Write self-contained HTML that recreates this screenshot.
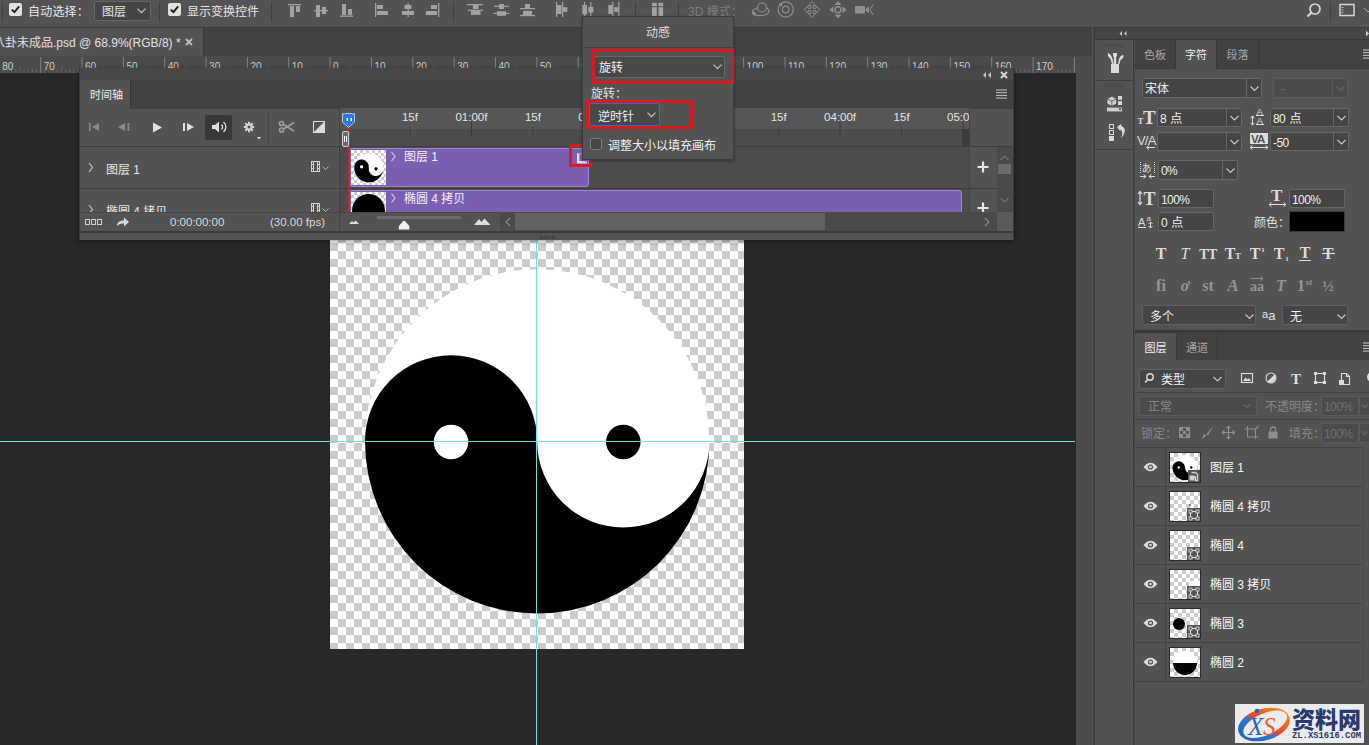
<!DOCTYPE html>
<html lang="zh-CN">
<head>
<meta charset="utf-8">
<title>Photoshop</title>
<style>
*{box-sizing:border-box;margin:0;padding:0}
html,body{width:1369px;height:745px;overflow:hidden;background:#282828}
body{position:relative;font-family:"Liberation Sans","Noto Sans CJK SC",sans-serif;font-size:12px;color:#e6e6e6;line-height:1}
.a{position:absolute}
.t{position:absolute;white-space:nowrap;line-height:16px;height:16px}
svg{position:absolute;overflow:visible}
/* ---------- top bars ---------- */
#opt{left:0;top:0;width:1369px;height:28px;background:#535353;border-bottom:1px solid #3b3b3b}
#tabbar{left:0;top:28px;width:1092px;height:28px;background:#424242}
#doctab{left:0;top:28px;width:204px;height:28px;background:#535353;border-right:1px solid #383838}
#ruler{left:0;top:56px;width:1076px;height:17px;background:#4b4b4b}
.cb{position:absolute;width:13px;height:13px;background:#e1e1e1;border-radius:2px}
.sel{position:absolute;background:#454545;border:1px solid #666;border-radius:2px}
.sep{position:absolute;width:1px;background:#404040}
/* ---------- canvas ---------- */
#canvas{left:330px;top:240px;width:414px;height:409px;background-color:#fff;
 background-image:conic-gradient(#fff 25%,#ccc 0 50%,#fff 0 75%,#ccc 0);
 background-size:16px 16px;background-position:0 3px;overflow:hidden}
.guide{position:absolute;background:#6fe3e0}

/* ---------- right dock ---------- */
#vscroll{left:1076px;top:56px;width:17px;height:689px;background:#4b4b4b}
#dockline{left:1092px;top:27px;width:3px;height:718px;background:linear-gradient(90deg,#565656 0 1px,#404040 1px 3px)}
#docktop{left:1095px;top:28px;width:274px;height:12px;background:#454545;border-bottom:1px solid #383838}
#strip{left:1095px;top:40px;width:38px;height:705px;background:#535353;border-right:1px solid #5a5a5a}
#stripline{left:1133px;top:40px;width:3px;height:705px;background:linear-gradient(90deg,#3c3c3c 0 1.300px,#4b4b4b 1.300px 3px)}
#charpanel{left:1135px;top:40px;width:234px;height:294px;background:#535353}
#chartabs{left:1135px;top:40px;width:234px;height:28px;background:#424242;box-shadow:0 1px 0 #3c3c3c}
#laypanel{left:1135px;top:334px;width:234px;height:411px;background:#535353}
#laytabs{left:1135px;top:334px;width:234px;height:27px;background:#424242}
.tab{position:absolute;height:100%;top:0;border-right:1px solid #383838;color:#a6a6a6;text-align:center;font-size:11px}
.tab.on{background:#535353;color:#f0f0f0}
.inp{position:absolute;background:#454545;border:1px solid #666;border-radius:2px}
.inp.dim{background:#4b4b4b;border-color:#5a5a5a}
.inp i{position:absolute;right:14px;top:0;bottom:0;width:1px;background:#666}
.row{position:absolute;left:1135px;width:227px;height:39px;border-top:1px solid #434343}
.th{position:absolute;left:34px;top:4px;width:32px;height:31px;border:1px solid #2b2b2b;background-color:#fff;
 background-image:linear-gradient(45deg,#ccc 25%,transparent 25%,transparent 75%,#ccc 75%),linear-gradient(45deg,#ccc 25%,transparent 25%,transparent 75%,#ccc 75%);
 background-size:8px 8px;background-position:0 0,4px 4px;overflow:hidden}

/* ---------- timeline ---------- */
#tl{left:79px;top:68px;width:935px;height:172px;background:#535353;overflow:hidden;box-shadow:0 1px 5px rgba(0,0,0,.45);border-left:1px solid #3a3a3a;border-right:1px solid #3a3a3a}
#tl .a{position:absolute}
.pl{fill:#d9d9d9}
</style>
</head>
<body>
<!-- canvas -->
<div id="canvas" class="a"></div>
<svg class="a" style="left:330px;top:240px" width="414" height="409" viewBox="330 240 414 409">
  <circle cx="537.200" cy="441.400" r="172.200" fill="#fff"/>
  <path d="M365 441.400 A172.200 172.200 0 0 0 709.400 441.400 A86.100 86.100 0 0 1 537.200 441.400 A86.100 86.100 0 0 0 365 441.400Z" fill="#000"/>
  <circle cx="451" cy="442" r="17.300" fill="#fff"/>
  <circle cx="623.300" cy="442" r="17.300" fill="#000"/>
</svg>
<div class="guide" style="left:0;top:441px;width:1075px;height:1px"></div>
<div class="guide" style="left:536px;top:240px;width:1px;height:505px"></div>

<!-- top bars -->
<div id="opt" class="a"></div>
<div id="tabbar" class="a"></div>
<div id="doctab" class="a"></div>
<div id="ruler" class="a"></div>

<!-- options bar content -->
<div class="sep" style="left:2px;top:2px;height:20px"></div>
<div class="cb" style="left:9px;top:3px"></div>
<svg style="left:9px;top:3px" width="13" height="13" viewBox="0 0 13 13"><path d="M2.8 6.6 L5.4 9.2 L10.2 3.4" fill="none" stroke="#1e1e1e" stroke-width="1.9"/></svg>
<div class="t" style="left:28px;top:4px;font-size:12px;letter-spacing:0.2px">自动选择：</div>
<div class="sel" style="left:94px;top:1px;width:57px;height:20px"></div>
<div class="t" style="left:102px;top:4px;font-size:12px">图层</div>
<svg style="left:137px;top:8px" width="9" height="6" viewBox="0 0 9 6"><path d="M0.5 0.7 L4.5 4.7 L8.5 0.7" fill="none" stroke="#c8c8c8" stroke-width="1.1"/></svg>
<div class="sep" style="left:159px;top:2px;height:20px"></div>
<div class="cb" style="left:168px;top:3px"></div>
<svg style="left:168px;top:3px" width="13" height="13" viewBox="0 0 13 13"><path d="M2.8 6.6 L5.4 9.2 L10.2 3.4" fill="none" stroke="#1e1e1e" stroke-width="1.9"/></svg>
<div class="t" style="left:187px;top:4px;font-size:12px">显示变换控件</div>
<div class="sep" style="left:271px;top:2px;height:20px"></div>
<div class="sep" style="left:453px;top:2px;height:20px"></div>
<div class="sep" style="left:635px;top:2px;height:20px"></div>
<div class="sep" style="left:678px;top:2px;height:20px"></div>
<!-- align icons -->
<svg style="left:283px;top:2px" width="360" height="18" viewBox="283 2 360 18" fill="#a2a2a2">
 <!-- align top -->
 <rect x="288" y="4" width="13" height="1.3"/><rect x="290" y="6" width="4" height="11"/><rect x="296" y="6" width="4" height="6"/>
 <!-- align vcenter -->
 <rect x="314" y="10" width="14" height="1.3"/><rect x="316" y="5" width="4" height="12"/><rect x="322" y="7" width="4" height="7"/>
 <!-- align bottom -->
 <rect x="340" y="15.5" width="13" height="1.3"/><rect x="342" y="4" width="4" height="11"/><rect x="348" y="9" width="4" height="6"/>
 <!-- align left -->
 <rect x="375" y="3" width="1.3" height="14"/><rect x="377" y="5" width="6" height="4"/><rect x="377" y="11" width="11" height="4"/>
 <!-- align hcenter -->
 <rect x="407.5" y="3" width="1.3" height="14"/><rect x="404.5" y="5" width="7" height="4"/><rect x="402" y="11" width="12" height="4"/>
 <!-- align right -->
 <rect x="438" y="3" width="1.3" height="14"/><rect x="431" y="5" width="6" height="4"/><rect x="426" y="11" width="11" height="4"/>
 <!-- distribute top -->
 <rect x="467" y="4" width="16" height="1.200"/><rect x="473" y="5" width="5.500" height="4"/><rect x="468" y="9.700" width="15" height="1.200"/><rect x="471" y="10.500" width="9.500" height="4.300"/>
 <!-- distribute vcenter -->
 <rect x="494" y="5.700" width="15" height="1.200"/><rect x="499" y="4" width="5" height="5"/><rect x="493.500" y="12.800" width="15.500" height="1.200"/><rect x="497" y="11.200" width="9" height="4.600"/>
 <!-- distribute bottom -->
 <rect x="525" y="4" width="5" height="4.200"/><rect x="520" y="8" width="15" height="1.200"/><rect x="523" y="10.800" width="9" height="4.300"/><rect x="520" y="15" width="15" height="1.200"/>
 <!-- distribute left -->
 <rect x="556" y="2" width="1.200" height="15"/><rect x="557" y="5" width="4.500" height="9"/><rect x="562" y="2" width="1.200" height="15"/><rect x="563" y="7.200" width="4.300" height="4.600"/>
 <!-- distribute hcenter -->
 <rect x="584" y="2" width="1.200" height="14"/><rect x="582.400" y="5" width="4.600" height="9.500"/><rect x="590.200" y="2" width="1.200" height="14"/><rect x="588.300" y="6.800" width="5" height="5.700"/>
 <!-- distribute right -->
 <rect x="612.200" y="2" width="1.200" height="14"/><rect x="608.300" y="5" width="4.300" height="9"/><rect x="618.300" y="2" width="1.200" height="14"/><rect x="614.200" y="7.200" width="4.400" height="4.600"/>
</svg>
<svg style="left:648px;top:2px" width="16" height="16" viewBox="648 2 16 16" fill="#a2a2a2">
 <rect x="652" y="2.800" width="4.800" height="3.400"/><rect x="658.400" y="2.800" width="4.800" height="3.400"/><rect x="652" y="7.200" width="4.800" height="9"/><rect x="658.400" y="7.200" width="4.800" height="9"/>
</svg>
<div class="t" style="left:688px;top:4px;font-size:12px;color:#7c7c7c">3D 模式：</div>
<!-- 3D icons -->
<svg style="left:748px;top:0" width="130" height="22" viewBox="748 0 130 22" fill="none" stroke="#8e8e8e" stroke-width="1.200">
 <circle cx="762" cy="7.500" r="4.500"/><path d="M757.500 8 q-6 1.500 -5 5 q2 3.500 10 2.500 q7 -1.500 6.500 -5 q-1 -2 -3 -2.500"/><path d="M752.500 11 l0.500 4.500 l4 -1.500z" fill="#8e8e8e" stroke="none"/>
 <circle cx="785.700" cy="9.500" r="7.600"/><circle cx="785.700" cy="9.500" r="3.300"/><path d="M779 3 l1.500 4 l2.500 -3z" fill="#8e8e8e" stroke="none"/>
 <path d="M812 1.500 l3.500 4 h-2.300 v2.800 h2.800 v-2.300 l4 3.500 l-4 3.500 v-2.300 h-2.800 v2.800 h2.300 l-3.500 4 l-3.500 -4 h2.300 v-2.800 h-2.800 v2.300 l-4 -3.500 l4 -3.500 v2.300 h2.800 v-2.800 h-2.300z" stroke-width="1"/>
 <path d="M838 1 l-3.500 4 h7z M838 18.500 l-3.500 -4 h7z M829.500 9.700 l4 -3.500 v7z M846.500 9.700 l-4 -3.500 v7z" fill="#8e8e8e" stroke="none"/><circle cx="838" cy="9.700" r="3" stroke-width="1.400"/>
 <rect x="855" y="6" width="10" height="7.500" rx="1" fill="#8e8e8e" stroke="none"/><path d="M865 9.700 l4 -3.500 v7z" fill="#8e8e8e" stroke="none"/><path d="M873 4.500 l-3 5.200 l3 5.200" stroke-width="1"/>
</svg>
<!-- search + workspace -->
<svg style="left:1305px;top:1px" width="64" height="20" viewBox="1305 1 64 20" fill="none" stroke="#d6d6d6">
 <circle cx="1315" cy="9" r="5" stroke-width="1.7"/><path d="M1311.3 12.7 L1307.5 16.5" stroke-width="2.2"/>
 <rect x="1340" y="4.5" width="14" height="11" stroke-width="1.5"/><path d="M1342.5 7v1 M1342.5 9.5v1 M1342.5 12v1" stroke-width="1.5"/>
 <path d="M1364 8 l4 4 l2 -2" stroke-width="1" stroke="#aaa"/>
</svg>
<div class="sep" style="left:1330px;top:2px;height:20px"></div>

<!-- doc tab -->
<div class="t" style="left:-7px;top:35px;font-size:12px;color:#e0e0e0">八卦未成品.psd @ 68.9%(RGB/8) *</div>
<svg style="left:185px;top:38px" width="8" height="8" viewBox="0 0 8 8"><path d="M1 1 L7 7 M7 1 L1 7" stroke="#bdbdbd" stroke-width="1.8"/></svg>

<!-- ruler -->

<svg style="left:0;top:0;overflow:hidden" width="1076" height="74" viewBox="0 0 1076 74">
<g fill="#626262"><rect x="2.9" y="69" width="1" height="4"/><rect x="7.1" y="69" width="1" height="4"/><rect x="11.2" y="69" width="1" height="4"/><rect x="15.3" y="69" width="1" height="4"/><rect x="19.5" y="66" width="1" height="7"/><rect x="23.6" y="69" width="1" height="4"/><rect x="27.7" y="69" width="1" height="4"/><rect x="31.9" y="69" width="1" height="4"/><rect x="36.0" y="69" width="1" height="4"/><rect x="44.3" y="69" width="1" height="4"/><rect x="48.4" y="69" width="1" height="4"/><rect x="52.6" y="69" width="1" height="4"/><rect x="56.7" y="69" width="1" height="4"/><rect x="60.8" y="66" width="1" height="7"/><rect x="65.0" y="69" width="1" height="4"/><rect x="69.1" y="69" width="1" height="4"/><rect x="73.2" y="69" width="1" height="4"/><rect x="77.4" y="69" width="1" height="4"/><rect x="85.6" y="69" width="1" height="4"/><rect x="89.8" y="69" width="1" height="4"/><rect x="93.9" y="69" width="1" height="4"/><rect x="98.0" y="69" width="1" height="4"/><rect x="102.2" y="66" width="1" height="7"/><rect x="106.3" y="69" width="1" height="4"/><rect x="110.4" y="69" width="1" height="4"/><rect x="114.6" y="69" width="1" height="4"/><rect x="118.7" y="69" width="1" height="4"/><rect x="127.0" y="69" width="1" height="4"/><rect x="131.1" y="69" width="1" height="4"/><rect x="135.3" y="69" width="1" height="4"/><rect x="139.4" y="69" width="1" height="4"/><rect x="143.5" y="66" width="1" height="7"/><rect x="147.7" y="69" width="1" height="4"/><rect x="151.8" y="69" width="1" height="4"/><rect x="155.9" y="69" width="1" height="4"/><rect x="160.1" y="69" width="1" height="4"/><rect x="168.3" y="69" width="1" height="4"/><rect x="172.5" y="69" width="1" height="4"/><rect x="176.6" y="69" width="1" height="4"/><rect x="180.7" y="69" width="1" height="4"/><rect x="184.9" y="66" width="1" height="7"/><rect x="189.0" y="69" width="1" height="4"/><rect x="193.1" y="69" width="1" height="4"/><rect x="197.3" y="69" width="1" height="4"/><rect x="201.4" y="69" width="1" height="4"/><rect x="209.7" y="69" width="1" height="4"/><rect x="213.8" y="69" width="1" height="4"/><rect x="218.0" y="69" width="1" height="4"/><rect x="222.1" y="69" width="1" height="4"/><rect x="226.2" y="66" width="1" height="7"/><rect x="230.4" y="69" width="1" height="4"/><rect x="234.5" y="69" width="1" height="4"/><rect x="238.6" y="69" width="1" height="4"/><rect x="242.8" y="69" width="1" height="4"/><rect x="251.0" y="69" width="1" height="4"/><rect x="255.2" y="69" width="1" height="4"/><rect x="259.3" y="69" width="1" height="4"/><rect x="263.4" y="69" width="1" height="4"/><rect x="267.6" y="66" width="1" height="7"/><rect x="271.7" y="69" width="1" height="4"/><rect x="275.8" y="69" width="1" height="4"/><rect x="280.0" y="69" width="1" height="4"/><rect x="284.1" y="69" width="1" height="4"/><rect x="292.4" y="69" width="1" height="4"/><rect x="296.5" y="69" width="1" height="4"/><rect x="300.7" y="69" width="1" height="4"/><rect x="304.8" y="69" width="1" height="4"/><rect x="308.9" y="66" width="1" height="7"/><rect x="313.1" y="69" width="1" height="4"/><rect x="317.2" y="69" width="1" height="4"/><rect x="321.3" y="69" width="1" height="4"/><rect x="325.5" y="69" width="1" height="4"/><rect x="333.7" y="69" width="1" height="4"/><rect x="337.9" y="69" width="1" height="4"/><rect x="342.0" y="69" width="1" height="4"/><rect x="346.1" y="69" width="1" height="4"/><rect x="350.3" y="66" width="1" height="7"/><rect x="354.4" y="69" width="1" height="4"/><rect x="358.5" y="69" width="1" height="4"/><rect x="362.7" y="69" width="1" height="4"/><rect x="366.8" y="69" width="1" height="4"/><rect x="375.1" y="69" width="1" height="4"/><rect x="379.2" y="69" width="1" height="4"/><rect x="383.4" y="69" width="1" height="4"/><rect x="387.5" y="69" width="1" height="4"/><rect x="391.6" y="66" width="1" height="7"/><rect x="395.8" y="69" width="1" height="4"/><rect x="399.9" y="69" width="1" height="4"/><rect x="404.0" y="69" width="1" height="4"/><rect x="408.2" y="69" width="1" height="4"/><rect x="416.4" y="69" width="1" height="4"/><rect x="420.6" y="69" width="1" height="4"/><rect x="424.7" y="69" width="1" height="4"/><rect x="428.8" y="69" width="1" height="4"/><rect x="433.0" y="66" width="1" height="7"/><rect x="437.1" y="69" width="1" height="4"/><rect x="441.2" y="69" width="1" height="4"/><rect x="445.4" y="69" width="1" height="4"/><rect x="449.5" y="69" width="1" height="4"/><rect x="457.8" y="69" width="1" height="4"/><rect x="461.9" y="69" width="1" height="4"/><rect x="466.1" y="69" width="1" height="4"/><rect x="470.2" y="69" width="1" height="4"/><rect x="474.3" y="66" width="1" height="7"/><rect x="478.5" y="69" width="1" height="4"/><rect x="482.6" y="69" width="1" height="4"/><rect x="486.7" y="69" width="1" height="4"/><rect x="490.9" y="69" width="1" height="4"/><rect x="499.1" y="69" width="1" height="4"/><rect x="503.3" y="69" width="1" height="4"/><rect x="507.4" y="69" width="1" height="4"/><rect x="511.5" y="69" width="1" height="4"/><rect x="515.7" y="66" width="1" height="7"/><rect x="519.8" y="69" width="1" height="4"/><rect x="523.9" y="69" width="1" height="4"/><rect x="528.1" y="69" width="1" height="4"/><rect x="532.2" y="69" width="1" height="4"/><rect x="540.5" y="69" width="1" height="4"/><rect x="544.6" y="69" width="1" height="4"/><rect x="548.8" y="69" width="1" height="4"/><rect x="552.9" y="69" width="1" height="4"/><rect x="557.0" y="66" width="1" height="7"/><rect x="561.2" y="69" width="1" height="4"/><rect x="565.3" y="69" width="1" height="4"/><rect x="569.4" y="69" width="1" height="4"/><rect x="573.6" y="69" width="1" height="4"/><rect x="581.8" y="69" width="1" height="4"/><rect x="586.0" y="69" width="1" height="4"/><rect x="590.1" y="69" width="1" height="4"/><rect x="594.2" y="69" width="1" height="4"/><rect x="598.4" y="66" width="1" height="7"/><rect x="602.5" y="69" width="1" height="4"/><rect x="606.6" y="69" width="1" height="4"/><rect x="610.8" y="69" width="1" height="4"/><rect x="614.9" y="69" width="1" height="4"/><rect x="623.2" y="69" width="1" height="4"/><rect x="627.3" y="69" width="1" height="4"/><rect x="631.5" y="69" width="1" height="4"/><rect x="635.6" y="69" width="1" height="4"/><rect x="639.7" y="66" width="1" height="7"/><rect x="643.9" y="69" width="1" height="4"/><rect x="648.0" y="69" width="1" height="4"/><rect x="652.1" y="69" width="1" height="4"/><rect x="656.3" y="69" width="1" height="4"/><rect x="664.5" y="69" width="1" height="4"/><rect x="668.7" y="69" width="1" height="4"/><rect x="672.8" y="69" width="1" height="4"/><rect x="676.9" y="69" width="1" height="4"/><rect x="681.1" y="66" width="1" height="7"/><rect x="685.2" y="69" width="1" height="4"/><rect x="689.3" y="69" width="1" height="4"/><rect x="693.5" y="69" width="1" height="4"/><rect x="697.6" y="69" width="1" height="4"/><rect x="705.9" y="69" width="1" height="4"/><rect x="710.0" y="69" width="1" height="4"/><rect x="714.2" y="69" width="1" height="4"/><rect x="718.3" y="69" width="1" height="4"/><rect x="722.4" y="66" width="1" height="7"/><rect x="726.6" y="69" width="1" height="4"/><rect x="730.7" y="69" width="1" height="4"/><rect x="734.8" y="69" width="1" height="4"/><rect x="739.0" y="69" width="1" height="4"/><rect x="747.2" y="69" width="1" height="4"/><rect x="751.4" y="69" width="1" height="4"/><rect x="755.5" y="69" width="1" height="4"/><rect x="759.6" y="69" width="1" height="4"/><rect x="763.8" y="66" width="1" height="7"/><rect x="767.9" y="69" width="1" height="4"/><rect x="772.0" y="69" width="1" height="4"/><rect x="776.2" y="69" width="1" height="4"/><rect x="780.3" y="69" width="1" height="4"/><rect x="788.6" y="69" width="1" height="4"/><rect x="792.7" y="69" width="1" height="4"/><rect x="796.9" y="69" width="1" height="4"/><rect x="801.0" y="69" width="1" height="4"/><rect x="805.1" y="66" width="1" height="7"/><rect x="809.3" y="69" width="1" height="4"/><rect x="813.4" y="69" width="1" height="4"/><rect x="817.5" y="69" width="1" height="4"/><rect x="821.7" y="69" width="1" height="4"/><rect x="829.9" y="69" width="1" height="4"/><rect x="834.1" y="69" width="1" height="4"/><rect x="838.2" y="69" width="1" height="4"/><rect x="842.3" y="69" width="1" height="4"/><rect x="846.5" y="66" width="1" height="7"/><rect x="850.6" y="69" width="1" height="4"/><rect x="854.7" y="69" width="1" height="4"/><rect x="858.9" y="69" width="1" height="4"/><rect x="863.0" y="69" width="1" height="4"/><rect x="871.3" y="69" width="1" height="4"/><rect x="875.4" y="69" width="1" height="4"/><rect x="879.6" y="69" width="1" height="4"/><rect x="883.7" y="69" width="1" height="4"/><rect x="887.8" y="66" width="1" height="7"/><rect x="892.0" y="69" width="1" height="4"/><rect x="896.1" y="69" width="1" height="4"/><rect x="900.2" y="69" width="1" height="4"/><rect x="904.4" y="69" width="1" height="4"/><rect x="912.6" y="69" width="1" height="4"/><rect x="916.8" y="69" width="1" height="4"/><rect x="920.9" y="69" width="1" height="4"/><rect x="925.0" y="69" width="1" height="4"/><rect x="929.2" y="66" width="1" height="7"/><rect x="933.3" y="69" width="1" height="4"/><rect x="937.4" y="69" width="1" height="4"/><rect x="941.6" y="69" width="1" height="4"/><rect x="945.7" y="69" width="1" height="4"/><rect x="954.0" y="69" width="1" height="4"/><rect x="958.1" y="69" width="1" height="4"/><rect x="962.3" y="69" width="1" height="4"/><rect x="966.4" y="69" width="1" height="4"/><rect x="970.5" y="66" width="1" height="7"/><rect x="974.7" y="69" width="1" height="4"/><rect x="978.8" y="69" width="1" height="4"/><rect x="982.9" y="69" width="1" height="4"/><rect x="987.1" y="69" width="1" height="4"/><rect x="995.3" y="69" width="1" height="4"/><rect x="999.5" y="69" width="1" height="4"/><rect x="1003.6" y="69" width="1" height="4"/><rect x="1007.7" y="69" width="1" height="4"/><rect x="1011.9" y="66" width="1" height="7"/><rect x="1016.0" y="69" width="1" height="4"/><rect x="1020.1" y="69" width="1" height="4"/><rect x="1024.3" y="69" width="1" height="4"/><rect x="1028.4" y="69" width="1" height="4"/><rect x="1036.7" y="69" width="1" height="4"/><rect x="1040.8" y="69" width="1" height="4"/><rect x="1045.0" y="69" width="1" height="4"/><rect x="1049.1" y="69" width="1" height="4"/><rect x="1053.2" y="66" width="1" height="7"/><rect x="1057.4" y="69" width="1" height="4"/><rect x="1061.5" y="69" width="1" height="4"/><rect x="1065.6" y="69" width="1" height="4"/><rect x="1069.8" y="69" width="1" height="4"/><rect x="1078.0" y="69" width="1" height="4"/><rect x="1082.2" y="69" width="1" height="4"/><rect x="1086.3" y="69" width="1" height="4"/><rect x="1090.4" y="69" width="1" height="4"/><rect x="1094.6" y="66" width="1" height="7"/><rect x="1098.7" y="69" width="1" height="4"/><rect x="1102.8" y="69" width="1" height="4"/><rect x="1107.0" y="69" width="1" height="4"/><rect x="1111.1" y="69" width="1" height="4"/></g><g fill="#808080"><rect x="-1.2" y="57" width="1" height="16"/><rect x="40.2" y="57" width="1" height="16"/><rect x="81.5" y="57" width="1" height="16"/><rect x="122.9" y="57" width="1" height="16"/><rect x="164.2" y="57" width="1" height="16"/><rect x="205.6" y="57" width="1" height="16"/><rect x="246.9" y="57" width="1" height="16"/><rect x="288.2" y="57" width="1" height="16"/><rect x="329.6" y="57" width="1" height="16"/><rect x="371.0" y="57" width="1" height="16"/><rect x="412.3" y="57" width="1" height="16"/><rect x="453.7" y="57" width="1" height="16"/><rect x="495.0" y="57" width="1" height="16"/><rect x="536.4" y="57" width="1" height="16"/><rect x="577.7" y="57" width="1" height="16"/><rect x="619.0" y="57" width="1" height="16"/><rect x="660.4" y="57" width="1" height="16"/><rect x="701.8" y="57" width="1" height="16"/><rect x="743.1" y="57" width="1" height="16"/><rect x="784.5" y="57" width="1" height="16"/><rect x="825.8" y="57" width="1" height="16"/><rect x="867.2" y="57" width="1" height="16"/><rect x="908.5" y="57" width="1" height="16"/><rect x="949.9" y="57" width="1" height="16"/><rect x="991.2" y="57" width="1" height="16"/><rect x="1032.6" y="57" width="1" height="16"/><rect x="1073.9" y="57" width="1" height="16"/></g>
<g fill="#cdcdcd" font-size="10" font-family="Liberation Sans, sans-serif"><text x="2.3" y="69.500">80</text><text x="43.7" y="69.500">70</text><text x="85.0" y="69.500">60</text><text x="126.4" y="69.500">50</text><text x="167.7" y="69.500">40</text><text x="209.1" y="69.500">30</text><text x="250.4" y="69.500">20</text><text x="291.8" y="69.500">10</text><text x="333.1" y="69.500">0</text><text x="374.5" y="69.500">10</text><text x="415.8" y="69.500">20</text><text x="457.2" y="69.500">30</text><text x="498.5" y="69.500">40</text><text x="539.9" y="69.500">50</text><text x="581.2" y="69.500">60</text><text x="622.5" y="69.500">70</text><text x="663.9" y="69.500">80</text><text x="705.2" y="69.500">90</text><text x="746.6" y="69.500">100</text><text x="788.0" y="69.500">110</text><text x="829.3" y="69.500">120</text><text x="870.7" y="69.500">130</text><text x="912.0" y="69.500">140</text><text x="953.4" y="69.500">150</text><text x="994.7" y="69.500">160</text><text x="1036.1" y="69.500">170</text><text x="1077.4" y="69.500">180</text></g>
</svg>

<!-- timeline panel -->
<div id="tl" class="a">
</div>
<div class="a" style="left:80px;top:68px;width:933px;height:12px;background:#484848"></div>
<div class="a" style="left:80px;top:80px;width:933px;height:29px;background:#424242"></div>
<div class="a" style="left:80px;top:80px;width:51px;height:29px;background:#535353;border-right:1px solid #383838"></div>
<div class="t" style="left:90px;top:87px;font-size:11px;color:#f0f0f0">时间轴</div>
<svg style="left:980px;top:70px" width="30" height="10" viewBox="980 70 30 10"><path d="M986 72 l-3 3 l3 3z M991 72 l-3 3 l3 3z" fill="#c8c8c8"/><path d="M1001 72 l6 6 M1007 72 l-6 6" stroke="#d2d2d2" stroke-width="2"/></svg>
<svg style="left:996px;top:89px" width="12" height="10" viewBox="0 0 12 10"><path d="M0 1h11M0 3.7h11M0 6.4h11M0 9.1h11" stroke="#c8c8c8" stroke-width="1"/></svg>
<!-- time ruler -->
<div class="a" style="left:340px;top:108px;width:629px;height:21px;background:#565656"></div>
<div class="a" style="left:340px;top:129px;width:629px;height:17px;background:#4c4c4c"></div>
<div class="a" style="left:962px;top:129px;width:7px;height:17px;background:#3c3c3c"></div>
<div class="a" style="left:80px;top:146px;width:933px;height:1px;background:#3e3e3e"></div>
<!-- tracks -->
<div class="a" style="left:340px;top:147px;width:629px;height:65px;background:#4c4c4c"></div>
<div class="a" style="left:80px;top:188px;width:917px;height:1px;background:#3e3e3e"></div>
<div class="a" style="left:339px;top:108px;width:1px;height:123px;background:#444"></div>
<div class="a" style="left:969px;top:108px;width:1px;height:104px;background:#444"></div>
<div class="a" style="left:997px;top:147px;width:16px;height:65px;background:#4a4a4a"></div>
<div class="a" style="left:998px;top:164px;width:13px;height:10px;background:#6b6b6b"></div>
<svg style="left:999px;top:153px" width="12" height="55" viewBox="0 0 12 55" fill="none" stroke="#8a8a8a" stroke-width="1"><path d="M1.5 7 l4 -4 l4 4 M1.5 45 l4 4 l4 -4"/></svg>
<svg style="left:976px;top:160px" width="14" height="60" viewBox="976 160 14 60" stroke="#e6e6e6" stroke-width="2.2"><path d="M983 161.5 v11 M977.5 167 h11 M983 202.5 v11 M977.5 208 h11"/></svg>
<svg style="left:340px;top:108px;overflow:hidden" width="629" height="38" viewBox="340 108 629 38">
<g fill="#3a3a3a"><rect x="409.4" y="127" width="1" height="8"/><rect x="470.9" y="122" width="1" height="15"/><rect x="532.4" y="127" width="1" height="8"/><rect x="593.8" y="122" width="1" height="15"/><rect x="655.2" y="127" width="1" height="8"/><rect x="716.7" y="122" width="1" height="15"/><rect x="778.2" y="127" width="1" height="8"/><rect x="839.6" y="122" width="1" height="15"/><rect x="901.1" y="127" width="1" height="8"/><rect x="962.5" y="122" width="1" height="15"/></g>
<g fill="#e4e4e4" font-size="11.5" font-family="Liberation Sans, sans-serif"><text x="409.9" y="121" text-anchor="middle">15f</text><text x="471.4" y="121" text-anchor="middle">01:00f</text><text x="532.9" y="121" text-anchor="middle">15f</text><text x="594.3" y="121" text-anchor="middle">02:00f</text><text x="655.8" y="121" text-anchor="middle">15f</text><text x="717.2" y="121" text-anchor="middle">03:00f</text><text x="778.7" y="121" text-anchor="middle">15f</text><text x="840.1" y="121" text-anchor="middle">04:00f</text><text x="901.6" y="121" text-anchor="middle">15f</text><text x="963.0" y="121" text-anchor="middle">05:00f</text></g>
</svg>
<!-- clips -->
<div class="a" style="left:349px;top:148px;width:240px;height:39px;background:#7b5fb3;border:1px solid #9d86cc;border-radius:3px"></div>
<div class="a" style="left:349px;top:190px;width:613px;height:30px;background:#7b5fb3;border:1px solid #9d86cc;border-radius:3px"></div>
<div class="a" style="left:351px;top:150px;width:35px;height:35px;background-color:#fff;background-image:linear-gradient(45deg,#ccc 25%,transparent 25%,transparent 75%,#ccc 75%),linear-gradient(45deg,#ccc 25%,transparent 25%,transparent 75%,#ccc 75%);background-size:6px 6px;background-position:0 0,3px 3px"></div>
<svg style="left:351px;top:150px" width="35" height="35" viewBox="-17.5 -17.5 35 35">
 <g transform="translate(0.300 0.300) rotate(8) scale(0.970)"><circle r="15" fill="#fff"/><path d="M-15 0 A15 15 0 0 0 15 0 A7.5 7.5 0 0 1 0 0 A7.5 7.5 0 0 0 -15 0Z" fill="#000"/><circle cx="-7.5" r="1.7" fill="#fff"/><circle cx="7.5" r="1.7" fill="#000"/></g>
</svg>
<div class="a" style="left:351px;top:192px;width:35px;height:28px;background-color:#fff;background-image:linear-gradient(45deg,#ccc 25%,transparent 25%,transparent 75%,#ccc 75%),linear-gradient(45deg,#ccc 25%,transparent 25%,transparent 75%,#ccc 75%);background-size:6px 6px;background-position:0 0,3px 3px;overflow:hidden"><div style="position:absolute;left:1px;top:2px;width:33px;height:33px;border-radius:50%;background:#000"></div></div>
<svg style="left:390px;top:150px" width="10" height="60" viewBox="390 150 10 60" fill="none" stroke="#d9cff0" stroke-width="1.1"><path d="M391.5 152 l3.5 4.5 l-3.5 4.5 M391.5 193.5 l3.5 4.5 l-3.5 4.5"/></svg>
<div class="t" style="left:404px;top:149px;font-size:12px;color:#f4f0fb">图层 1</div>
<div class="t" style="left:404px;top:191px;font-size:12px;color:#f4f0fb">椭圆 4 拷贝</div>
<!-- transition icon + red box -->
<svg style="left:576.500px;top:152.500px" width="10" height="11" viewBox="0 0 10 11"><path d="M1.200 0 v9.300 h8.800" fill="none" stroke="#e4dcf4" stroke-width="2.400"/><path d="M1.200 0.800 h8 v8.500" fill="none" stroke="#a892d4" stroke-width="1.200"/></svg>
<div class="a" style="left:569px;top:144px;width:23px;height:23px;border:3px solid #dc1820"></div>
<!-- bottom bar -->
<div class="a" style="left:80px;top:212px;width:933px;height:19px;background:#535353;border-top:1px solid #484848"></div>
<div class="a" style="left:339px;top:212px;width:1px;height:19px;background:#444"></div>
<div class="a" style="left:500px;top:212px;width:497px;height:19px;background:#4a4a4a"></div>
<div class="a" style="left:515px;top:213px;width:310px;height:17px;background:#626262"></div>
<div class="a" style="left:997px;top:212px;width:16px;height:19px;background:#5a5a5a"></div>
<div class="a" style="left:80px;top:231px;width:933px;height:2px;background:#3c3c3c"></div>
<div class="a" style="left:80px;top:233px;width:933px;height:7px;background:#545454"></div>
<div class="a" style="left:540px;top:236px;width:15px;height:3px;background:repeating-linear-gradient(90deg,#3e3e3e 0 1px,transparent 1px 2px)"></div>
<svg style="left:500px;top:216px" width="495" height="12" viewBox="500 216 495 12" fill="none" stroke="#8c8c8c" stroke-width="1.1"><path d="M510 218 l-4 4 l4 4 M985 218 l4 4 l-4 4"/></svg>
<div class="a" style="left:377px;top:216px;width:84px;height:3px;background:#6c6c6c;border-radius:1px"></div>
<svg style="left:340px;top:212px" width="160" height="19" viewBox="340 212 160 19" fill="#dcdcdc"><path d="M349 224 l3 -3 l1.500 1.5 l2 -2 l3.500 3.500z"/><path d="M474 225 l5 -6 l2.500 3 l3 -3.500 l6 6.500z"/><path d="M398.800 229.500 v-2.500 q0 -1 0.700 -1.800 l3.700 -4 q0.900 -0.900 1.800 0 l3.700 4 q0.700 0.800 0.700 1.800 v2.500z" fill="#f0f0f0"/></svg>
<div class="t" style="left:170px;top:214px;font-size:11.5px;color:#d8d8d8">0:00:00:00</div>
<div class="t" style="left:270px;top:214px;font-size:11.5px;color:#d8d8d8">(30.00 fps)</div>
<svg style="left:84px;top:216px" width="50" height="12" viewBox="84 216 50 12" fill="none" stroke="#d0d0d0"><rect x="85.500" y="219.500" width="4" height="5"/><rect x="91.500" y="219.500" width="4" height="5"/><rect x="97.500" y="219.500" width="4" height="5"/><path d="M117 226 c0 -4 3 -5.500 7 -5.500 v-3 l5 4.500 l-5 4.500 v-3 c-3 0 -5 0.500 -7 2.500z" fill="#d8d8d8" stroke="none"/></svg>
<!-- left track labels -->
<svg style="left:86px;top:160px;overflow:hidden" width="10" height="52" viewBox="86 160 10 52" fill="none" stroke="#c8c8c8" stroke-width="1.1"><path d="M89 163 l3.500 4.500 l-3.500 4.500 M89 205 l3.500 4.500 l-3.500 4.500"/></svg>
<div class="t" style="left:106px;top:161.5px;font-size:12px">图层 1</div>
<div class="t" style="left:106px;top:204px;font-size:12px;height:8px;overflow:hidden">椭圆 4 拷贝</div>
<svg style="left:308px;top:160px;overflow:hidden" width="26" height="52" viewBox="308 160 26 52" fill="none" stroke="#d2d2d2" stroke-width="1"><g id="film"><rect x="311.500" y="161.500" width="8" height="10"/><path d="M313.500 161.500 v10 M317.500 161.500 v10 M311.500 164.500 h2 M311.500 168.500 h2 M317.500 164.500 h2 M317.500 168.500 h2"/><path d="M322.500 166.500 l3 3 l3 -3" stroke="#b0b0b0"/></g><g transform="translate(0,42)"><rect x="311.500" y="161.500" width="8" height="10"/><path d="M313.500 161.500 v10 M317.500 161.500 v10 M311.500 164.500 h2 M311.500 168.500 h2 M317.500 164.500 h2 M317.500 168.500 h2"/><path d="M322.500 166.500 l3 3 l3 -3" stroke="#b0b0b0"/></g></svg>
<!-- mask row-2 overflow into bottom bar is handled by bottom bar painted later -->
<!-- transport controls -->
<div class="a" style="left:205px;top:115px;width:27px;height:25px;background:#383838;border-radius:2px"></div>
<div class="a" style="left:268px;top:112px;width:1px;height:32px;background:#444"></div>
<svg style="left:84px;top:112px" width="250" height="32" viewBox="84 112 250 32">
 <g fill="#8a8a8a"><rect x="89" y="123" width="1.6" height="8"/><path d="M99 123 l-7 4 l7 4z"/><path d="M125 123 l-7 4 l7 4z"/><rect x="127.500" y="123" width="1.800" height="8"/></g>
 <g fill="#e0e0e0"><path d="M153 122.500 l9 5 l-9 5z"/><rect x="183" y="123" width="2" height="8"/><path d="M187 123 l7 4 l-7 4z"/>
 <path d="M212 125 h3 l4 -3.500 v11 l-4 -3.500 h-3z"/></g>
 <path d="M221.500 124.500 a3.500 3.500 0 0 1 0 5 M223.500 122 a6.500 6.500 0 0 1 0 10" fill="none" stroke="#e0e0e0" stroke-width="1.300"/>
 <g transform="translate(249 127)" fill="#d4d4d4"><circle r="3.600"/><g stroke="#d4d4d4" stroke-width="2"><path d="M0 -5.200 V5.200 M-5.200 0 H5.200 M-3.700 -3.700 L3.700 3.700 M-3.700 3.700 L3.700 -3.700"/></g><circle r="1.500" fill="#535353"/></g>
 <path d="M257 137 h4 l-2 2.500z" fill="#e0e0e0"/>
 <g fill="none" stroke="#9c9c9c" stroke-width="1.700"><circle cx="281.500" cy="123.500" r="2"/><circle cx="281.500" cy="130" r="2"/><path d="M283.500 124.500 L294 131 M283.500 129 L294 122.500"/></g>
 <rect x="313.500" y="121.500" width="11" height="11" fill="none" stroke="#dcdcdc"/><path d="M324 122 v10 h-10z" fill="#dcdcdc"/>
</svg>
<!-- playhead -->
<div class="a" style="left:348px;top:126px;width:2px;height:86px;background:#c4272d"></div>
<svg style="left:341.500px;top:113px" width="14" height="36" viewBox="341 112 14 36"><path d="M341.500 112.500 l1.500 0.800 l1.500 -0.800 h6 l1.500 0.800 l1.500 -0.800 v8.500 l-6 5.500 l-6 -5.500z" fill="#2878e0" stroke="#cfe0ff" stroke-width="0.800"/><rect x="345.500" y="117" width="1.500" height="3" fill="#fff"/><rect x="349.500" y="117" width="1.500" height="3" fill="#fff"/><rect x="341.500" y="130.500" width="6" height="15" rx="1.500" fill="#6a6a6a" stroke="#d0d0d0"/><path d="M343.500 135 v6 M345.500 135 v6" stroke="#fff" stroke-width="1"/></svg>

<!-- right dock -->
<div id="vscroll" class="a"></div>
<div id="dockline" class="a"></div>
<div id="docktop" class="a"></div>
<div id="strip" class="a"></div>
<div id="stripline" class="a"></div>
<div class="a" style="left:1095px;top:80px;width:39px;height:1px;background:#3e3e3e"></div>
<div class="a" style="left:1095px;top:149px;width:39px;height:1px;background:#3e3e3e"></div>
<svg style="left:1095px;top:27px" width="274" height="130" viewBox="1095 27 274 130">
 <path d="M1122 31 l-2.500 2.500 l2.500 2.500z M1126.500 31 l-2.500 2.500 l2.500 2.500z" fill="#c8c8c8"/>
 <path d="M1366 30.500 l3 3 l-3 3z" fill="#c8c8c8"/>
 <path d="M1105 45.500 h20 M1105 85.500 h20" stroke="#474747" stroke-width="4" stroke-dasharray="1 1"/>
 <!-- brush cup -->
 <g fill="#dcdcdc"><rect x="1111" y="64" width="8" height="9"/><path d="M1112 64 l-1.500 -5 q-3.500 -3 -2.500 -6 q3 1 4.500 6 l1 5z"/><rect x="1113.800" y="53.500" width="2.400" height="10.500"/><rect x="1113" y="53" width="4" height="3.500"/><path d="M1118 64 l1 -5 q1.500 -4 4.500 -4 q0.500 3 -3 5 l-1 4z"/></g>
 <!-- 3D cube lib -->
 <g fill="#cfcfcf" stroke="#535353" stroke-width="0.800"><path d="M1107 98.800 l4.800 -2.500 l4.800 2.500 v5 l-4.800 2.500 l-4.800 -2.500z"/><path d="M1107 98.800 l4.800 2.300 l4.800 -2.300 M1111.800 101.100 v5" fill="none"/></g>
 <g fill="#d8d8d8"><rect x="1118" y="96" width="4" height="3.800"/><rect x="1118" y="101.200" width="4" height="3.800"/><rect x="1107" y="107.600" width="15" height="3.800" fill="#cfcfcf"/><path d="M1118.500 108.600 h3 l-1.500 2z" fill="#333"/></g>
 <!-- history -->
 <g fill="none" stroke="#d8d8d8" stroke-width="1"><rect x="1109.500" y="124.500" width="4" height="4"/><rect x="1109.500" y="130.500" width="4" height="4"/></g>
 <rect x="1109" y="136" width="5" height="5" fill="#d8d8d8"/>
 <path d="M1117 127 l4 -3 l0.500 2 q4.500 2 3 7 q-1 3 -4 5 q3 -4 1 -7.500 l-1.500 -1 l0.500 2z" fill="#d8d8d8"/>
</svg>
<!-- character panel -->
<div id="charpanel" class="a"></div>
<div id="chartabs" class="a">
 <div class="tab" style="left:0;width:41px;line-height:31px">色板</div>
 <div class="tab on" style="left:41px;width:41px;line-height:31px;height:29px">字符</div>
 <div class="tab" style="left:82px;width:42px;line-height:31px">段落</div>
</div>
<svg style="left:1363px;top:49px" width="6" height="10" viewBox="0 0 6 10"><path d="M0 1h6M0 3.700h6M0 6.400h6M0 9.100h6" stroke="#c8c8c8" stroke-width="1"/></svg>
<!-- row1 font -->
<div class="inp" style="left:1142px;top:78px;width:120px;height:20px"><i></i></div>
<div class="t" style="left:1145px;top:81px;font-size:12px;color:#f0f0f0;">宋体</div>
<div class="inp dim" style="left:1273px;top:78px;width:75px;height:20px"><i style="background:#5a5a5a"></i></div>
<div class="t" style="left:1281px;top:81px;font-size:12px;color:#6a6a6a">-</div>
<!-- row2 -->
<div class="inp" style="left:1157px;top:108px;width:85px;height:19px"><i></i></div>
<div class="t" style="left:1160px;top:111px;font-size:12px;color:#f0f0f0;letter-spacing:-0.6px;word-spacing:1.5px">8 点</div>
<div class="inp" style="left:1270px;top:108px;width:79px;height:19px"><i></i></div>
<div class="t" style="left:1273px;top:111px;font-size:12px;color:#f0f0f0;letter-spacing:-0.6px;word-spacing:1.5px">80 点</div>
<!-- row3 -->
<div class="inp" style="left:1157px;top:132px;width:85px;height:19px"><i></i></div>
<div class="inp" style="left:1270px;top:132px;width:79px;height:19px"><i></i></div>
<div class="t" style="left:1273px;top:135px;font-size:12px;color:#f0f0f0;letter-spacing:-0.6px;word-spacing:1.5px">-50</div>
<!-- row4 -->
<div class="inp" style="left:1158px;top:160px;width:80px;height:20px"><i></i></div>
<div class="t" style="left:1161px;top:163px;font-size:12px;color:#f0f0f0;letter-spacing:-0.6px;word-spacing:1.5px">0%</div>
<!-- row5 -->
<div class="inp" style="left:1158px;top:189px;width:56px;height:19px"></div>
<div class="t" style="left:1161px;top:192px;font-size:12px;color:#f0f0f0;letter-spacing:-0.6px;word-spacing:1.5px">100%</div>
<div class="inp" style="left:1289px;top:189px;width:56px;height:19px"></div>
<div class="t" style="left:1292px;top:192px;font-size:12px;color:#f0f0f0;letter-spacing:-0.6px;word-spacing:1.5px">100%</div>
<!-- row6 -->
<div class="inp" style="left:1158px;top:212px;width:56px;height:19px"></div>
<div class="t" style="left:1161px;top:215px;font-size:12px;color:#f0f0f0;letter-spacing:-0.6px;word-spacing:1.5px">0 点</div>
<div class="t" style="left:1254px;top:215px;font-size:12px;color:#e0e0e0">颜色：</div>
<div class="a" style="left:1289px;top:211px;width:56px;height:21px;background:#000;border:1px solid #3a3a3a"></div>
<!-- dropdown arrows -->
<svg style="left:1135px;top:78px" width="234" height="110" viewBox="1135 78 234 110" fill="none" stroke="#c8c8c8" stroke-width="1.100">
 <path d="M1250.500 86.500 l4 4 l4 -4 M1230.500 116 l4 4 l4 -4 M1337.500 116 l4 4 l4 -4 M1230.500 140 l4 4 l4 -4 M1337.500 140 l4 4 l4 -4 M1226.500 168.500 l4 4 l4 -4"/>
 <path d="M1336.500 86.500 l4 4 l4 -4" stroke="#666"/>
</svg>
<!-- bottom selects -->
<div class="inp" style="left:1142px;top:305px;width:114px;height:20px;border-color:#606060"></div>
<div class="t" style="left:1150px;top:309px;font-size:12px;color:#f0f0f0">多个</div>
<div class="inp" style="left:1282px;top:305px;width:66px;height:20px;border-color:#606060"></div>
<div class="t" style="left:1290px;top:309px;font-size:12px;color:#f0f0f0">无</div>
<svg style="left:1135px;top:306px" width="234" height="20" viewBox="1135 306 234 20" fill="none" stroke="#c8c8c8" stroke-width="1.100"><path d="M1245.500 314.500 l4 4 l4 -4 M1337.500 314.500 l4 4 l4 -4"/></svg>
<div class="t" style="left:1262px;top:306px;font-size:11px;color:#e0e0e0">a<span style="font-size:13px;position:relative;top:2px">a</span></div>

<!-- popup -->
<div class="a" style="left:582px;top:16px;width:152px;height:144px;background:#535353;border:1px solid #3c3c3c;box-shadow:0 1px 3px rgba(0,0,0,.35)"></div>
<div class="a" style="left:583px;top:47px;width:150px;height:1px;background:#424242"></div>
<div class="t" style="left:583px;top:25px;width:150px;text-align:center;font-size:12px;color:#dcdcdc">动感</div>
<div class="sel" style="left:594px;top:56px;width:131px;height:22px;background:#484848"></div>
<div class="t" style="left:599px;top:60px;font-size:12px;color:#f0f0f0">旋转</div>
<svg style="left:713px;top:64px" width="9" height="6" viewBox="0 0 9 6"><path d="M0.5 0.7 L4.500 4.700 L8.500 0.700" fill="none" stroke="#c8c8c8" stroke-width="1.100"/></svg>
<div class="a" style="left:592px;top:49px;width:142px;height:35px;border:3px solid #dc1820"></div>
<div class="t" style="left:591px;top:86px;font-size:12px;color:#e0e0e0">旋转：</div>
<div class="sel" style="left:589px;top:103px;width:71px;height:23px;background:#484848;border-color:#2f6cc8"></div>
<div class="t" style="left:598px;top:108.5px;font-size:12px;color:#f0f0f0">逆时针</div>
<svg style="left:647px;top:112px" width="9" height="6" viewBox="0 0 9 6"><path d="M0.500 0.700 L4.500 4.700 L8.500 0.700" fill="none" stroke="#c8c8c8" stroke-width="1.100"/></svg>
<div class="a" style="left:586px;top:100px;width:107px;height:29px;border:3px solid #dc1820"></div>
<div class="a" style="left:590px;top:138px;width:12px;height:12px;background:#454545;border:1px solid #7a7a7a;border-radius:2px"></div>
<div class="t" style="left:608px;top:137.5px;font-size:12px;color:#f0f0f0">调整大小以填充画布</div>

<!-- char panel icons -->
<svg style="left:1135px;top:100px" width="234" height="200" viewBox="1135 100 234 200" font-family="Liberation Serif, serif" font-weight="bold" fill="#dcdcdc">
 <text x="1137.500" y="123.500" font-size="9">T</text><text x="1143" y="123.500" font-size="19">T</text>
 <g font-family="Liberation Sans, sans-serif" font-weight="normal">
 <text x="1256.500" y="115" font-size="9.500">A</text><text x="1256.500" y="124" font-size="9.500">A</text>
 <path d="M1252.500 116 v9 M1250.500 118.300 l2 -2.500 l2 2.500 M1250.500 122.700 l2 2.500 l2 -2.500 M1256 115.500 h8 M1256 124.500 h8" fill="none" stroke="#dcdcdc" stroke-width="1"/>
 <text x="1137" y="145" font-size="13" letter-spacing="-0.800">V/A</text>
 <path d="M1155 147.500 h-8 M1149 145.500 l-2.500 2 l2.500 2" fill="none" stroke="#dcdcdc" stroke-width="1"/>
 <rect x="1250" y="133" width="18" height="11" fill="#dcdcdc"/><text x="1251" y="142.800" font-size="11.500" font-weight="bold" fill="#535353" letter-spacing="-0.700">VA</text>
 <path d="M1250 147.500 h18 M1252.500 145.500 l-2.500 2 l2.500 2 M1265.500 145.500 l2.500 2 l-2.500 2" fill="none" stroke="#dcdcdc" stroke-width="1"/>
 <text x="1141.500" y="172" font-size="10" font-family="Noto Sans CJK JP, sans-serif">あ</text>
 <path d="M1140.500 162 v12 M1154.500 162 v12" fill="none" stroke="#dcdcdc" stroke-width="1" stroke-dasharray="1 1"/>
 <path d="M1140 176.500 h6 M1149 176.500 h6 M1143.500 174.500 l2.500 2 l-2.500 2 M1151.500 174.500 l-2.500 2 l2.500 2" fill="none" stroke="#dcdcdc" stroke-width="1"/>
 </g>
 <path d="M1140 191.500 v13 M1138 194 l2 -2.500 l2 2.500 M1138 202 l2 2.500 l2 -2.500" fill="none" stroke="#dcdcdc" stroke-width="1.200"/>
 <text x="1143.500" y="205" font-size="18">T</text>
 <text x="1271" y="201" font-size="17">T</text>
 <path d="M1269 204.500 h17 M1271.500 202.500 l-2.500 2 l2.500 2 M1283.500 202.500 l2.500 2 l-2.500 2" fill="none" stroke="#dcdcdc" stroke-width="1"/>
 <g font-family="Liberation Sans, sans-serif" font-weight="normal"><text x="1138" y="226" font-size="11">A</text><text x="1146.500" y="221" font-size="8">a</text>
 <path d="M1138 227.500 h8 M1150.500 222 v6 M1148.500 224 l2 -2 l2 2 M1148.500 226 l2 2 l2 -2" fill="none" stroke="#dcdcdc" stroke-width="1"/></g>
 <!-- style row -->
 <g font-size="16" text-anchor="middle">
  <text x="1161" y="258.500">T</text>
  <text x="1185" y="258.500" font-style="italic" font-weight="normal">T</text>
  <text x="1208" y="258.500" font-size="14" letter-spacing="-0.500">TT</text>
  <text x="1230" y="258.500">T</text><text x="1238" y="258.500" font-size="9">T</text>
  <text x="1255" y="258.500">T</text><text x="1263" y="252" font-size="7">1</text>
  <text x="1279" y="258.500">T</text><text x="1287" y="261" font-size="7">1</text>
  <text x="1305" y="257.500">T</text>
  <text x="1328" y="258.500">T</text>
 </g>
 <path d="M1299 260.500 h12" stroke="#dcdcdc" stroke-width="1"/><path d="M1322 253.500 h13" stroke="#dcdcdc" stroke-width="1.200"/>
 <!-- opentype row -->
 <g font-size="16" text-anchor="middle" fill="#949494" font-weight="bold">
  <text x="1161" y="291">fi</text>
  <text x="1185" y="291" font-style="italic">&#417;</text>
  <text x="1208" y="291">st</text>
  <text x="1233" y="291" font-style="italic" font-size="17">A</text>
  <text x="1257" y="291" font-size="14">aa</text>
  <text x="1281" y="291" font-style="italic">T</text>
  <text x="1301" y="291">1</text><text x="1309" y="285" font-size="9">st</text>
  <text x="1328" y="291" font-size="15">&#189;</text>
 </g>
 <path d="M1250 278.500 h13 M1260.500 276.500 l2.500 2 l-2.500 2" fill="none" stroke="#8c8c8c" stroke-width="1"/>
</svg>

<!-- layers panel -->
<div class="a" style="left:1135px;top:330px;width:234px;height:3px;background:#3a3a3a"></div>
<div id="laypanel" class="a" style="top:333px;height:412px"></div>
<div id="laytabs" class="a" style="top:333px;height:27px">
 <div class="tab on" style="left:0;width:42px;line-height:30px">图层</div>
 <div class="tab" style="left:42px;width:41px;line-height:30px">通道</div>
</div>
<svg style="left:1363px;top:342px" width="6" height="10" viewBox="0 0 6 10"><path d="M0 1h6M0 3.700h6M0 6.400h6M0 9.100h6" stroke="#c8c8c8" stroke-width="1"/></svg>
<div class="inp" style="left:1139px;top:369px;width:87px;height:20px;border-color:#606060"></div>
<div class="t" style="left:1161px;top:372px;font-size:12px;color:#f0f0f0">类型</div>
<div class="a" style="left:1135px;top:392px;width:234px;height:1px;background:#434343"></div>
<div class="inp dim" style="left:1139px;top:396px;width:118px;height:20px"></div>
<div class="t" style="left:1148px;top:399px;font-size:12px;color:#868686">正常</div>
<div class="t" style="left:1265px;top:399px;font-size:12px;color:#868686">不透明度：</div>
<div class="inp dim" style="left:1321px;top:396px;width:38px;height:20px"></div>
<div class="t" style="left:1324px;top:399px;font-size:12px;color:#707070;letter-spacing:-0.6px;word-spacing:1.5px">100%</div>
<div class="inp dim" style="left:1359px;top:396px;width:14px;height:20px"></div>
<div class="a" style="left:1135px;top:419px;width:234px;height:1px;background:#434343"></div>
<div class="t" style="left:1141px;top:426px;font-size:12px;color:#868686">锁定：</div>
<div class="t" style="left:1289px;top:426px;font-size:12px;color:#868686">填充：</div>
<div class="inp dim" style="left:1321px;top:423px;width:38px;height:20px"></div>
<div class="t" style="left:1324px;top:426px;font-size:12px;color:#707070;letter-spacing:-0.6px;word-spacing:1.5px">100%</div>
<div class="inp dim" style="left:1359px;top:423px;width:14px;height:20px"></div>
<svg style="left:1135px;top:361px" width="234" height="90" viewBox="1135 361 234 90" fill="none" stroke="#dcdcdc" stroke-width="1.100">
 <circle cx="1150" cy="377" r="3.200" stroke-width="1.400"/><path d="M1147.800 379.500 l-2.800 3" stroke-width="1.600"/>
 <path d="M1213.500 377 l4 4 l4 -4" stroke="#c8c8c8"/>
 <path d="M1243.500 404.500 l3 3 l3 -3" stroke="#6a6a6a"/>
 <path d="M1361.500 404.500 l3 3 l3 -3 M1361.500 431.500 l3 3 l3 -3" stroke="#6a6a6a"/>
 <!-- filter icons -->
 <rect x="1241.500" y="373.500" width="11" height="9"/><path d="M1243 381 l2.500 -3.500 l2 2 l1.500 -1.500 l2 3z" fill="#dcdcdc" stroke="none"/>
 <circle cx="1271" cy="378" r="5"/><path d="M1267.500 381.500 a5 5 0 0 0 7 -7z" fill="#dcdcdc" stroke="none"/>
 <text x="1296" y="384" font-family="Liberation Serif, serif" font-weight="bold" font-size="15" text-anchor="middle" fill="#dcdcdc" stroke="none">T</text>
 <rect x="1315.500" y="373.500" width="9" height="9"/><g fill="#dcdcdc" stroke="none"><rect x="1314" y="372" width="3" height="3"/><rect x="1323" y="372" width="3" height="3"/><rect x="1314" y="381" width="3" height="3"/><rect x="1323" y="381" width="3" height="3"/></g>
 <path d="M1341.500 384.500 v-11 h5 l3 3 v8z M1346.500 373.500 v3 h3"/><rect x="1339" y="380" width="5" height="5" fill="#dcdcdc" stroke="none"/>
 <circle cx="1372" cy="377" r="5" fill="#dcdcdc" stroke="none"/>
 <!-- lock icons (dim) -->
 <g stroke="#8e8e8e" fill="#8e8e8e">
 <rect x="1179.500" y="427.500" width="10" height="10" fill="none"/><g stroke="none"><rect x="1180" y="428" width="3" height="3"/><rect x="1186" y="428" width="3" height="3"/><rect x="1183" y="431" width="3" height="3"/><rect x="1180" y="434" width="3" height="3"/><rect x="1186" y="434" width="3" height="3"/></g>
 <path d="M1213 426.500 l-6.500 7.500 l1.500 1.500z M1206 435 q-1 3 -4.500 3.500 q2 -1.500 2.500 -4.500z" stroke="none"/>
 <path d="M1228.500 426 v13 M1222 432.500 h13 M1228.500 426 l-2 2.500 M1228.500 426 l2 2.500 M1228.500 439 l-2 -2.500 M1228.500 439 l2 -2.500 M1222 432.500 l2.500 -2 M1222 432.500 l2.500 2 M1235 432.500 l-2.500 -2 M1235 432.500 l-2.500 2" fill="none"/>
 <path d="M1247.500 426 v11 h11 M1244.500 429 h11 v10 M1255.500 429 l3 -3" fill="none"/>
 <rect x="1268.500" y="431.500" width="9" height="7" stroke="none"/><path d="M1270.500 431.500 v-2 a2.500 2.500 0 0 1 5 0 v2" fill="none" stroke-width="1.300"/>
 </g>
</svg>
<div class="row" style="top:447px"><div class="a" style="left:30px;top:0;width:1px;height:38px;background:#434343"></div>
<svg style="left:8px;top:14px" width="15" height="10" viewBox="0 0 15 10"><path d="M0.500 5 q7 -8.500 14 0 q-7 8.500 -14 0z" fill="#dcdcdc"/><circle cx="7.500" cy="5" r="2.600" fill="#535353"/><circle cx="7.500" cy="5" r="1.300" fill="#dcdcdc"/></svg>
<div class="th"><svg style="left:0;top:0" width="30" height="29" viewBox="0 0 30 29"><g transform="translate(15 14.600) scale(0.0727)"><circle r="172" fill="#fff"/><path d="M-172 0 A172 172 0 0 0 172 0 A86 86 0 0 1 0 0 A86 86 0 0 0 -172 0Z" fill="#000"/><circle cx="-86" r="17" fill="#fff"/><circle cx="86" r="17" fill="#000"/></g><rect x="18" y="17" width="12" height="12" fill="#535353"/><rect x="19.500" y="22.500" width="5" height="5" fill="#cfcfcf"/><path d="M21.500 19.500 h4 l2 2 v6 h-2 v-3.500 h-2" fill="none" stroke="#cfcfcf" stroke-width="1.300"/></svg></div><div class="t" style="left:75px;top:12px;font-size:12px;color:#fafafa">图层 1</div></div>
<div class="row" style="top:486px"><div class="a" style="left:30px;top:0;width:1px;height:38px;background:#434343"></div>
<svg style="left:8px;top:14px" width="15" height="10" viewBox="0 0 15 10"><path d="M0.500 5 q7 -8.500 14 0 q-7 8.500 -14 0z" fill="#dcdcdc"/><circle cx="7.500" cy="5" r="2.600" fill="#535353"/><circle cx="7.500" cy="5" r="1.300" fill="#dcdcdc"/></svg>
<div class="th"><svg style="left:0;top:0" width="30" height="29" viewBox="0 0 30 29"><circle cx="20" cy="13" r="0.800" fill="#000"/><rect x="17" y="16" width="13" height="13" fill="#535353"/><rect x="20.500" y="19.500" width="7" height="7" fill="none" stroke="#e0e0e0"/><g fill="#535353" stroke="#e0e0e0" stroke-width="0.800"><rect x="19" y="18" width="3" height="3"/><rect x="26" y="18" width="3" height="3"/><rect x="19" y="25" width="3" height="3"/><rect x="26" y="25" width="3" height="3"/></g></svg></div><div class="t" style="left:75px;top:12px;font-size:12px;color:#fafafa">椭圆 4 拷贝</div></div>
<div class="row" style="top:525px"><div class="a" style="left:30px;top:0;width:1px;height:38px;background:#434343"></div>
<svg style="left:8px;top:14px" width="15" height="10" viewBox="0 0 15 10"><path d="M0.500 5 q7 -8.500 14 0 q-7 8.500 -14 0z" fill="#dcdcdc"/><circle cx="7.500" cy="5" r="2.600" fill="#535353"/><circle cx="7.500" cy="5" r="1.300" fill="#dcdcdc"/></svg>
<div class="th"><svg style="left:0;top:0" width="30" height="29" viewBox="0 0 30 29"><circle cx="9" cy="13" r="0.800" fill="#fff"/><rect x="17" y="16" width="13" height="13" fill="#535353"/><rect x="20.500" y="19.500" width="7" height="7" fill="none" stroke="#e0e0e0"/><g fill="#535353" stroke="#e0e0e0" stroke-width="0.800"><rect x="19" y="18" width="3" height="3"/><rect x="26" y="18" width="3" height="3"/><rect x="19" y="25" width="3" height="3"/><rect x="26" y="25" width="3" height="3"/></g></svg></div><div class="t" style="left:75px;top:12px;font-size:12px;color:#fafafa">椭圆 4</div></div>
<div class="row" style="top:564px"><div class="a" style="left:30px;top:0;width:1px;height:38px;background:#434343"></div>
<svg style="left:8px;top:14px" width="15" height="10" viewBox="0 0 15 10"><path d="M0.500 5 q7 -8.500 14 0 q-7 8.500 -14 0z" fill="#dcdcdc"/><circle cx="7.500" cy="5" r="2.600" fill="#535353"/><circle cx="7.500" cy="5" r="1.300" fill="#dcdcdc"/></svg>
<div class="th"><svg style="left:0;top:0" width="30" height="29" viewBox="0 0 30 29"><path d="M19 11 h11 v6 h-11z" fill="#fff"/><rect x="17" y="16" width="13" height="13" fill="#535353"/><rect x="20.500" y="19.500" width="7" height="7" fill="none" stroke="#e0e0e0"/><g fill="#535353" stroke="#e0e0e0" stroke-width="0.800"><rect x="19" y="18" width="3" height="3"/><rect x="26" y="18" width="3" height="3"/><rect x="19" y="25" width="3" height="3"/><rect x="26" y="25" width="3" height="3"/></g></svg></div><div class="t" style="left:75px;top:12px;font-size:12px;color:#fafafa">椭圆 3 拷贝</div></div>
<div class="row" style="top:603px"><div class="a" style="left:30px;top:0;width:1px;height:38px;background:#434343"></div>
<svg style="left:8px;top:14px" width="15" height="10" viewBox="0 0 15 10"><path d="M0.500 5 q7 -8.500 14 0 q-7 8.500 -14 0z" fill="#dcdcdc"/><circle cx="7.500" cy="5" r="2.600" fill="#535353"/><circle cx="7.500" cy="5" r="1.300" fill="#dcdcdc"/></svg>
<div class="th"><svg style="left:0;top:0" width="30" height="29" viewBox="0 0 30 29"><circle cx="9" cy="15" r="6" fill="#000"/><rect x="17" y="16" width="13" height="13" fill="#535353"/><rect x="20.500" y="19.500" width="7" height="7" fill="none" stroke="#e0e0e0"/><g fill="#535353" stroke="#e0e0e0" stroke-width="0.800"><rect x="19" y="18" width="3" height="3"/><rect x="26" y="18" width="3" height="3"/><rect x="19" y="25" width="3" height="3"/><rect x="26" y="25" width="3" height="3"/></g></svg></div><div class="t" style="left:75px;top:12px;font-size:12px;color:#fafafa">椭圆 3</div></div>
<div class="row" style="top:642px"><div class="a" style="left:30px;top:0;width:1px;height:38px;background:#434343"></div>
<svg style="left:8px;top:14px" width="15" height="10" viewBox="0 0 15 10"><path d="M0.500 5 q7 -8.500 14 0 q-7 8.500 -14 0z" fill="#dcdcdc"/><circle cx="7.500" cy="5" r="2.600" fill="#535353"/><circle cx="7.500" cy="5" r="1.300" fill="#dcdcdc"/></svg>
<div class="th"><svg style="left:0;top:0" width="30" height="29" viewBox="0 0 30 29"><path d="M3 15 a12 12 0 0 1 24 0z" fill="#fff"/><path d="M3 15 a12 12 0 0 0 24 0z" fill="#000"/></svg></div><div class="t" style="left:75px;top:12px;font-size:12px;color:#fafafa">椭圆 2</div></div>
<div class="a" style="left:1135px;top:681px;width:227px;height:1px;background:#434343"></div><div class="a" style="left:1363px;top:447px;width:1px;height:235px;background:#484848"></div>
<!-- watermark -->
<div class="a" style="left:1235px;top:704px;width:129px;height:39px;background:#ebebeb"></div>
<svg style="left:1235px;top:704px" width="130" height="39" viewBox="0 0 130 39">
 <defs><linearGradient id="g1" x1="0" y1="1" x2="1" y2="0"><stop offset="0" stop-color="#1c5fb4"/><stop offset="0.400" stop-color="#2a78c8"/><stop offset="0.520" stop-color="#e8452a"/><stop offset="1" stop-color="#f5a21c"/></linearGradient></defs>
 <path d="M54.47 13.20 A26.5 15.5 -16 1 1 3.53 27.80 A26.5 15.5 -16 1 1 54.47 13.20Z M51.67 10.74 A23.5 10.8 -24 1 0 8.73 29.86 A23.5 10.8 -24 1 0 51.67 10.74Z" fill="url(#g1)" fill-rule="evenodd"/>
 <circle cx="22" cy="7" r="2.300" fill="#2a64b8"/>
 <text x="13" y="31" font-family="Liberation Serif, serif" font-style="italic" font-size="25" fill="#2a64b8">X</text>
 <text x="28" y="31" font-family="Liberation Serif, serif" font-style="italic" font-size="25" fill="#e8602a">S</text>
 <text x="57" y="24" font-family="Liberation Sans, Noto Sans CJK SC, sans-serif" font-weight="900" font-size="23" fill="#283a6e" textLength="69" lengthAdjust="spacingAndGlyphs">资料网</text>
 <text x="57" y="34" font-family="Liberation Mono, monospace" font-weight="bold" font-size="8.500" fill="#283a6e" textLength="69" lengthAdjust="spacingAndGlyphs">ZL.XS1616.COM</text>
</svg>
</body>
</html>
